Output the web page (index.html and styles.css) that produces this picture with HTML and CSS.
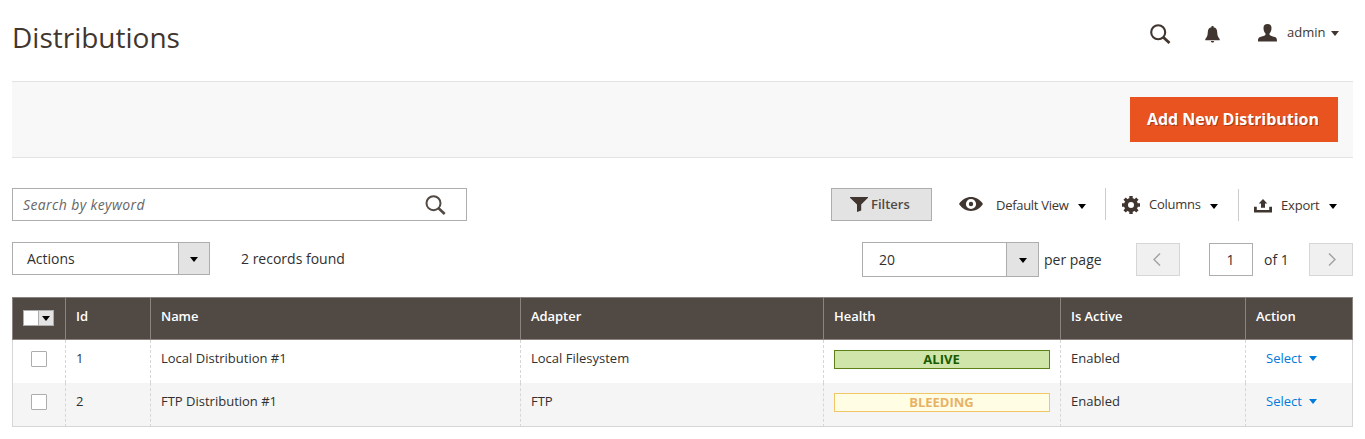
FILE: index.html
```html
<!DOCTYPE html>
<html lang="en">
<head>
<meta charset="utf-8">
<title>Distributions</title>
<link rel="stylesheet" href="styles.css">
</head>
<body>
<div class="page">
  <header class="header">
    <h1 class="title">Distributions</h1>
    <div class="header-tools">
      <svg class="icon-search" width="21" height="20" viewBox="0 0 21 20"><circle cx="8.2" cy="8.2" r="7" fill="none" stroke="currentColor" stroke-width="2.1"/><path d="M13 13l6.500 6" stroke="currentColor" stroke-width="2.8"/></svg>
      <svg class="icon-bell" width="15" height="17" viewBox="0 0 15 17"><path fill="currentColor" d="M6.500 0h2v1.200C11 1.600 12.100 3.500 12.200 6c.1 3.500.7 5 2.500 7v1.200H.3V13c1.800-2 2.400-3.500 2.500-7C2.900 3.500 4 1.600 6.500 1.200zM5.800 15h3.400c-.3 2-3.100 2-3.400 0z"/></svg>
      <svg class="icon-user" width="19" height="18" viewBox="0 0 19 18"><path fill="currentColor" d="M9.500 0c2.700 0 4 1.500 4 4 0 2.600-.8 4.300-2 5.500v1.300c.7 1 2.500 1.400 4.500 2 2.500.7 3 1.400 3 4.700H0c0-3.300.5-4 3-4.700 2-.6 3.800-1 4.500-2V9.500C6.300 8.300 5.500 6.600 5.500 4c0-2.500 1.300-4 4-4z"/></svg>
      <span class="user-name">admin</span>
      <svg class="caret" width="8" height="5" viewBox="0 0 8 5"><path d="M0 0h8L4 5z"/></svg>
    </div>
  </header>

  <div class="page-actions"><button class="primary">Add New Distribution</button></div>

  <div class="toolbar">
    <div class="search">
      <span class="placeholder">Search by keyword</span>
      <svg width="21" height="20" viewBox="0 0 21 20"><circle cx="8.500" cy="8.200" r="7" fill="none" stroke="currentColor" stroke-width="2"/><path d="M13.300 13l6.400 6" stroke="currentColor" stroke-width="2.600"/></svg>
    </div>
    <div class="filters">
      <svg width="18" height="15" viewBox="0 0 18 15"><path fill="currentColor" d="M0 0h18v.8L11.200 7.500v6L7 15V7.500L0 .8z"/></svg>
      <span>Filters</span>
    </div>
    <div class="tool view">
      <svg width="24" height="14" viewBox="0 0 24 14"><path fill="currentColor" fill-rule="evenodd" d="M0 7C6-2.200 18-2.200 24 7 18 16.200 6 16.200 0 7zM12 1.900a5.100 5.100 0 1 0 0 10.200 5.100 5.100 0 0 0 0-10.200z"/><circle cx="12" cy="7" r="2.200" fill="currentColor"/></svg>
      <span class="label">Default View</span>
      <svg class="caret" width="8" height="5" viewBox="0 0 8 5"><path d="M0 0h8L4 5z"/></svg>
    </div>
    <div class="tool columns">
      <svg width="18" height="18" viewBox="0 0 18 18"><circle cx="9" cy="9" r="5" fill="none" stroke="currentColor" stroke-width="4"/><path stroke="currentColor" stroke-width="3.400" d="M9 0v3.500M9 14.500V18M0 9h3.500M14.500 9H18M2.600 2.600l2.500 2.500M12.900 12.900l2.500 2.500M2.600 15.400l2.500-2.500M12.900 5.100l2.500-2.500"/></svg>
      <span class="label">Columns</span>
      <svg class="caret" width="8" height="5" viewBox="0 0 8 5"><path d="M0 0h8L4 5z"/></svg>
    </div>
    <div class="tool export">
      <svg width="18" height="14" viewBox="0 0 18 14"><path fill="currentColor" d="M9 0l4.300 4.500H11v4.300H7V4.500H4.700zM0 7.800h2.800v3.200h12.400V7.800H18V13.500H0z"/></svg>
      <span class="label">Export</span>
      <svg class="caret" width="8" height="5" viewBox="0 0 8 5"><path d="M0 0h8L4 5z"/></svg>
    </div>
  </div>

  <div class="controls">
    <div class="select actions"><span class="value">Actions</span><span class="arrow"><svg class="caret" width="8" height="5" viewBox="0 0 8 5"><path d="M0 0h8L4 5z"/></svg></span></div>
    <span class="records">2 records found</span>
    <div class="select size"><span class="value">20</span><span class="arrow"><svg class="caret" width="8" height="5" viewBox="0 0 8 5"><path d="M0 0h8L4 5z"/></svg></span></div>
    <span class="per-page">per page</span>
    <div class="pager-btn"><svg width="8" height="13" viewBox="0 0 8 13"><path d="M7 .5l-6 6 6 6"/></svg></div>
    <div class="page-no">1</div>
    <span class="page-of">of 1</span>
    <div class="pager-btn next"><svg width="8" height="13" viewBox="0 0 8 13"><path d="M1 .5l6 6-6 6"/></svg></div>
  </div>

  <table class="grid">
    <colgroup><col class="c-check"><col class="c-id"><col class="c-name"><col class="c-adapter"><col class="c-health"><col class="c-active"><col class="c-action"></colgroup>
    <thead>
      <tr>
        <th class="check"><span class="multi"><i class="multi-box"></i><i class="multi-arrow"><svg width="8" height="5" viewBox="0 0 8 5"><path d="M0 0h8L4 5z"/></svg></i></span></th>
        <th>Id</th><th>Name</th><th>Adapter</th><th>Health</th><th>Is Active</th><th>Action</th>
      </tr>
    </thead>
    <tbody>
      <tr>
        <td class="check"><i class="box"></i></td><td>1</td><td>Local Distribution #1</td><td>Local Filesystem</td>
        <td><div class="badge alive">ALIVE</div></td><td>Enabled</td>
        <td><span class="pick"><span>Select</span><svg width="8" height="5" viewBox="0 0 8 5"><path d="M0 0h8L4 5z"/></svg></span></td>
      </tr>
      <tr>
        <td class="check"><i class="box"></i></td><td>2</td><td>FTP Distribution #1</td><td>FTP</td>
        <td><div class="badge bleeding">BLEEDING</div></td><td>Enabled</td>
        <td><span class="pick"><span>Select</span><svg width="8" height="5" viewBox="0 0 8 5"><path d="M0 0h8L4 5z"/></svg></span></td>
      </tr>
    </tbody>
  </table>
</div>
</body>
</html>
```
FILE: styles.css
```css
* { box-sizing: border-box; }
body { margin: 0; background: #fff; color: #303030; font: 13px/18px "Open Sans", "Noto Sans", sans-serif; }
.page { width: 1341px; margin: 0 12px; }
svg { display: block; flex: none; }
.header { display: flex; justify-content: space-between; height: 81px; color: #41362f; }
.title { margin: 17px 0 0; font-size: 28px; line-height: 40px; font-weight: 400; }
.header-tools { display: flex; align-items: flex-start; padding-right: 14px; }
.icon-search { margin: 24px 34px 0 0; }
.icon-bell { margin: 26px 38px 0 0; }
.icon-user { margin: 24px 10px 0 0; }
.user-name { width: 44px; margin-top: 23px; white-space: nowrap; }
.header-tools .caret { margin-top: 31px; fill: #41362f; }
.page-actions { display: flex; justify-content: flex-end; height: 77px; padding: 15px 15px 0 0; background: #f8f8f8; border-top: 1px solid #e3e3e3; border-bottom: 1px solid #e3e3e3; }
.primary { width: 208px; height: 45px; padding: 0 2px 0 0; border: 0; background: #e9531f; color: #fff; font: 700 16px/45px "Open Sans", sans-serif; letter-spacing: -.02px; text-shadow: 1px 1px 0 rgba(0, 0, 0, .3); }
.toolbar { display: flex; margin-top: 30px; height: 33px; }
.search { display: flex; justify-content: space-between; width: 455px; height: 33px; padding: 0 20px 0 10px; border: 1px solid #adadad; color: #514943; }
.search svg { margin-top: 6px; }
.placeholder { color: #666; font-size: 14px; line-height: 31px; font-style: italic; letter-spacing: .38px; }
.filters { display: flex; width: 101px; height: 33px; margin-left: 364px; padding-left: 17px; border: 1px solid #adadad; background: #e3e3e3; color: #41362f; font-weight: 600; line-height: 31px; }
.filters svg { margin: 8px 4px 0 1px; }
.filters span { margin-left: -1px; color: #514943; }
.tool { display: flex; color: #41362f; }
.tool .label { white-space: nowrap; line-height: 34px; }
.caret { fill: #000; }
.tool .caret { margin-top: 16px; }
.view { width: 173px; padding-left: 27px; }
.view > svg:first-child { margin: 9px 13px 0 0; }
.view .label { width: 82px; letter-spacing: -.3px; }
.columns { width: 133px; height: 32px; padding-left: 16px; border-left: 1px solid #ccc; }
.columns > svg:first-child { margin: 8px 9px 0 0; }
.columns .label { width: 61px; line-height: 32px; letter-spacing: -.25px; }
.export { height: 32px; margin-top: 1px; padding-left: 15px; border-left: 1px solid #ccc; }
.export > svg:first-child { margin: 10px 9px 0 0; }
.export .label { width: 48px; line-height: 32px; letter-spacing: -.2px; }
.export .caret { margin-top: 15px; }
.controls { display: flex; margin-top: 21px; height: 35px; font-size: 14px; }
.select { display: flex; border: 1px solid #adadad; }
.select .value { flex: 1; }
.arrow { display: flex; align-items: center; justify-content: center; width: 31px; background: #e3e3e3; border-left: 1px solid #adadad; }
.actions { width: 198px; height: 33px; line-height: 31px; padding: 0; }
.actions .value { padding-left: 14px; }
.size { width: 177px; height: 35px; margin-left: auto; line-height: 34px; }
.size .value { padding-left: 16px; }
.size .arrow { width: 32px; }
.arrow .caret { margin-top: 2px; }
.records { margin-left: 31px; line-height: 33px; }
.per-page { width: 92px; padding-left: 5px; line-height: 36px; }
.pager-btn { width: 44px; height: 33px; margin: 1px 29px 0 5px; padding: 9px 0 0 16px; background: #f0f0f0; border: 1px solid #d6d6d6; }
.pager-btn svg { fill: none; stroke: #a5a3a1; stroke-width: 1.5; }
.page-no { width: 44px; height: 33px; margin-top: 1px; padding-right: 1px; border: 1px solid #adadad; text-align: center; line-height: 32px; }
.page-of { width: 56px; padding-left: 11px; line-height: 36px; }
.next { margin: 1px 0 0; padding-left: 18px; }
.grid { width: 1341px; margin-top: 20px; table-layout: fixed; border-spacing: 0; border-collapse: separate; }
.c-check { width: 53px; }
.c-id { width: 85px; }
.c-name { width: 370px; }
.c-adapter { width: 303px; }
.c-health { width: 237px; }
.c-active { width: 185px; }
.c-action { width: 108px; }
th, td { height: 43px; padding: 9px 10px 0; text-align: left; vertical-align: top; line-height: 18px; }
th { background: #514943; color: #fff; font-weight: 600; letter-spacing: -.05px; border: solid #8a837f; border-width: 1px 0 1px 1px; }
th:last-child { border-right-width: 1px; }
td { border-left: 1px dashed #d6d6d6; }
td:first-child { border-left-style: solid; }
td:last-child { border-right: 1px solid #d6d6d6; }
tbody tr:last-child td { height: 44px; background: #f5f5f5; border-bottom: 1px solid #d6d6d6; }
.multi { display: flex; width: 31px; height: 16px; margin-top: 3px; border: 1px solid #adadad; background: #fff; }
.multi-box { width: 14px; }
.multi-arrow { flex: 1; padding: 5px 0 0 3px; background: #e3e3e3; border-left: 1px solid #adadad; }
.box { display: block; width: 16px; height: 16px; margin: 2px 0 0 8px; border: 1px solid #adadad; border-radius: 1px; background: #fff; }
.badge { height: 19px; margin-top: 1px; border: 1px solid; text-align: center; font-weight: 700; line-height: 16px; padding-right: 1px; }
.alive { background: #d0e5a9; border-color: #5b8116; color: #185b00; }
.bleeding { background: #fffde3; border-color: #f1c766; color: #e8b266; }
.pick { display: flex; align-items: center; padding-left: 10px; color: #007bdb; }
.pick span { width: 43px; }
.pick svg { fill: #007bdb; }
```
